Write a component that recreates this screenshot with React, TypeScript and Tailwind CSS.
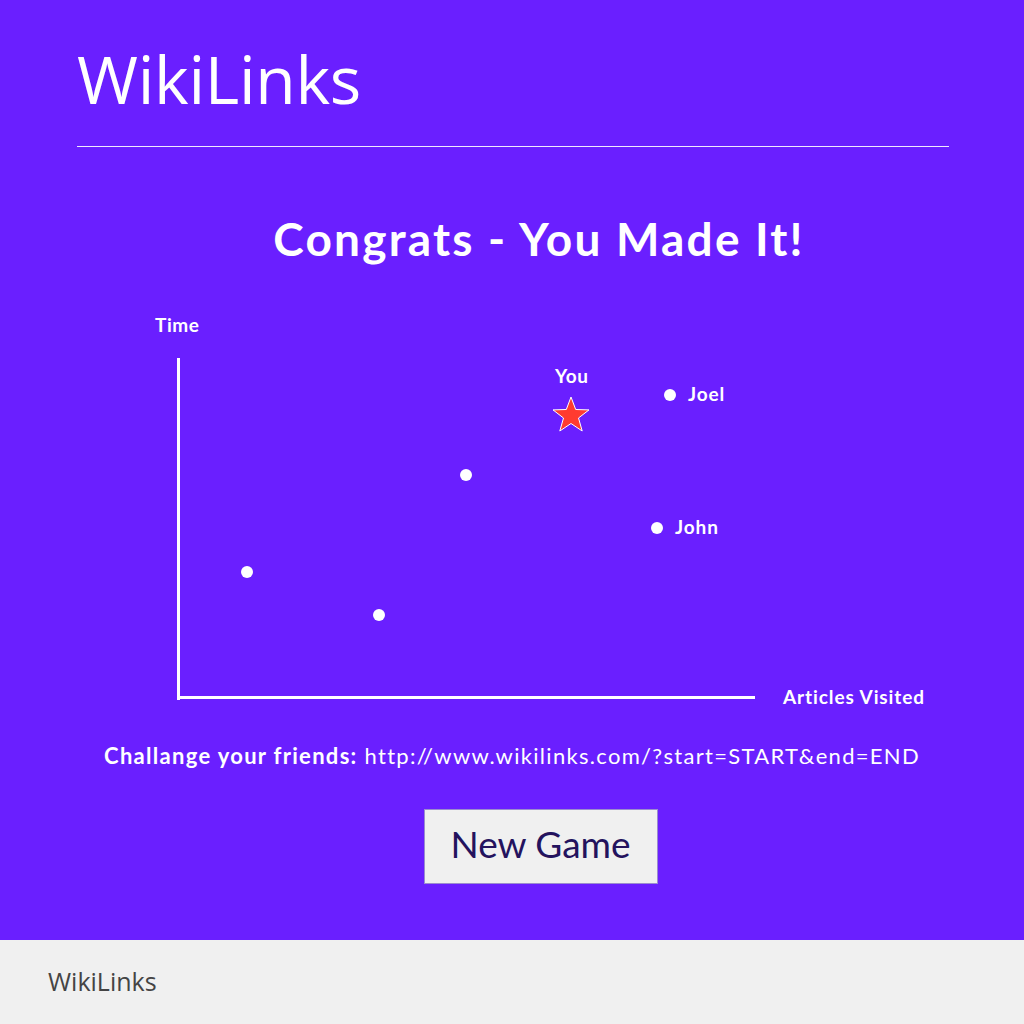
import React from 'react';

const points = [
  { x: 247, y: 572 },
  { x: 379, y: 615 },
  { x: 466, y: 475 },
  { x: 657, y: 528, label: 'John' },
  { x: 670, y: 395, label: 'Joel' },
];

// chart box top on page
const OY = 300;

const Star = () => (
  <svg width="40" height="40" viewBox="0 0 40 40">
    <polygon
      points="20,2 24.7,14.5 38,14.9 27.5,23 31.2,36 20,28.5 8.8,36 12.5,23 2,14.9 15.3,14.5"
      fill="#ff3b30"
      stroke="#ffffff"
      strokeWidth="1"
      strokeLinejoin="round"
    />
  </svg>
);

export default function App() {
  return (
    <div className="w-[1024px] h-[1024px] flex flex-col" style={{ fontFamily: 'Lato, "Open Sans", sans-serif' }}>
      <main className="h-[940px] bg-[#6a1fff] text-white flex flex-col">
        {/* Header */}
        <div className="px-[77px] pt-[38px]">
          <h1 className="text-[66px] leading-[80px] font-normal font-['Open_Sans',sans-serif] tracking-[-0.3px]">WikiLinks</h1>
          <div className="mt-[28px] h-px bg-white/90 w-[872px]" />
        </div>

        <h2 className="mt-[64px] text-center text-[46px] leading-[56px] font-bold tracking-[2.2px] pl-[54px]">Congrats - You Made It!</h2>

        {/* Chart */}
        <div className="relative mt-[33px] h-[420px] w-full">
          <span className="absolute left-[155px] top-[14px] text-[19px] font-bold leading-[22px] tracking-[0.6px]">Time</span>
          <div className="absolute left-[177px] top-[58px] w-[3px] h-[342px] bg-white" />
          <div className="absolute left-[177px] top-[396px] h-[3px] w-[578px] bg-white" />
          <span className="absolute left-[783px] top-[386px] text-[19px] font-bold leading-[22px] tracking-[0.9px]">Articles Visited</span>

          {points.map((p, i) => (
            <React.Fragment key={i}>
              <div
                className="absolute w-[12px] h-[12px] rounded-full bg-white"
                style={{ left: p.x - 6, top: p.y - OY - 6 }}
              />
              {p.label && (
                <span
                  className="absolute text-[19px] font-bold leading-[22px] tracking-[0.9px]"
                  style={{ left: p.x + 18, top: p.y - OY - 12 }}
                >
                  {p.label}
                </span>
              )}
            </React.Fragment>
          ))}

          <span className="absolute left-[555px] top-[65px] text-[19px] font-bold leading-[22px] tracking-[0.6px]">You</span>
          <div className="absolute left-[551px] top-[95px]">
            <Star />
          </div>
        </div>

        <p className="mt-[22px] text-center text-[22px] leading-[28px] tracking-[1.3px]">
          <span className="font-bold">Challange your friends:</span>{' '}
          <span className="font-normal">http://www.wikilinks.com/?start=START&amp;end=END</span>
        </p>

        <div className="mt-[39px] flex justify-center pl-[57px]">
          <button className="w-[234px] h-[75px] pb-[6px] bg-[#f0f0f0] border border-[#9b8ccf] text-[#24135e] text-[37px] font-normal">
            New Game
          </button>
        </div>
      </main>

      <footer className="h-[84px] bg-[#f0f0f0] flex items-center px-[48px]">
        <span className="text-[25px] text-[#444444] font-['Open_Sans',sans-serif]">WikiLinks</span>
      </footer>
    </div>
  );
}
